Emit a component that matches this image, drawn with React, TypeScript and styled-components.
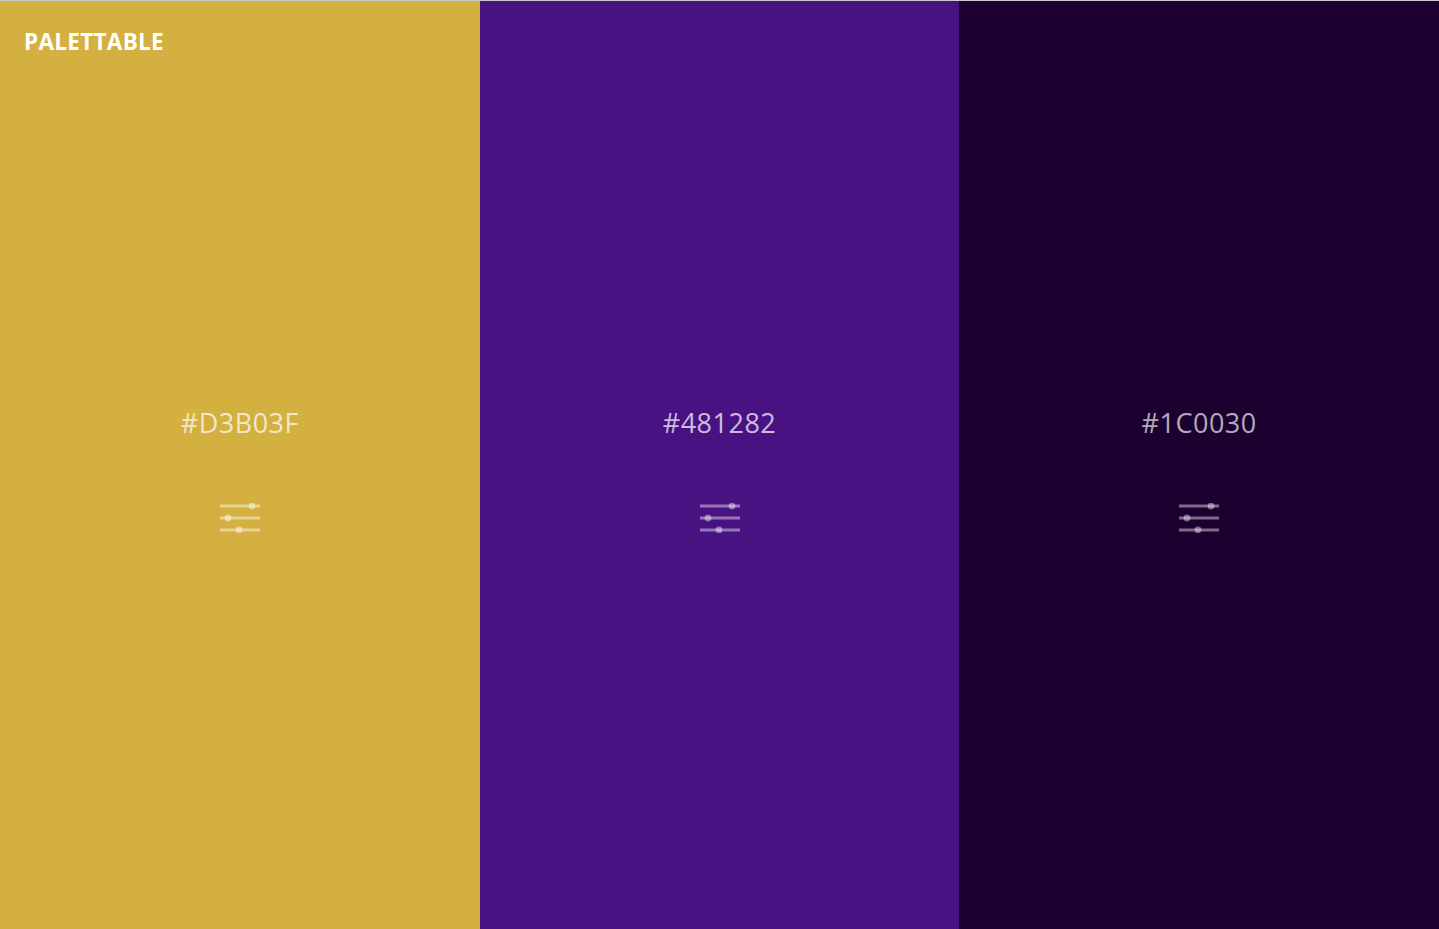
import React from 'react';
import styled, { createGlobalStyle } from 'styled-components';

const GlobalStyle = createGlobalStyle`
    html, body {
        margin: 0;
        padding: 0;
        height: 100%;
        overflow: hidden;
    }
    #root {
        height: 100%;
    }
`;

const COLORS = [
    { hex: '#D3B03F', text: 'rgba(255,255,255,0.72)', icon: 'rgba(255,255,255,0.45)' },
    { hex: '#481282', text: 'rgba(255,255,255,0.72)', icon: 'rgba(255,255,255,0.42)' },
    { hex: '#1C0030', text: 'rgba(255,255,255,0.68)', icon: 'rgba(255,255,255,0.42)' },
];

const Page = styled.div`
    position: relative;
    height: 100vh;
    box-sizing: border-box;
    border-top: 1px solid #c9c9c9;
    display: flex;
    font-family: "Open Sans", "Noto Sans", sans-serif;
`;

const Logo = styled.div`
    position: absolute;
    top: 25px;
    left: 24px;
    font-size: 22.5px;
    font-weight: 700;
    letter-spacing: 0.3px;
    color: #fff;
`;

const Swatch = styled.div<{ $bg: string; $fg: string }>`
    flex: 1;
    background-color: ${p => p.$bg};
    color: ${p => p.$fg};
    display: flex;
    flex-direction: column;
    align-items: center;
    justify-content: center;
    padding-top: 8px;
`;

const HexLabel = styled.div`
    font-size: 27px;
    line-height: 36px;
    letter-spacing: 0.5px;
    font-weight: 400;
`;

const AdjustButton = styled.button<{ $fg: string }>`
    margin-top: 62px;
    border: 0;
    background: none;
    padding: 0;
    width: 42px;
    height: 30px;
    color: ${p => p.$fg};
    display: flex;
    align-items: center;
    justify-content: center;
    cursor: pointer;
`;

const SlidersIcon = () => (
    <svg width="42" height="30" viewBox="0 0 42 30" fill="currentColor" stroke="currentColor">
        <line x1="1" y1="3" x2="41" y2="3" strokeWidth="2.8" />
        <line x1="1" y1="15" x2="41" y2="15" strokeWidth="2.8" />
        <line x1="1" y1="27" x2="41" y2="27" strokeWidth="2.8" />
        <circle cx="33" cy="3" r="3.4" stroke="none" />
        <circle cx="9" cy="15" r="3.4" stroke="none" />
        <circle cx="20" cy="27" r="3.4" stroke="none" />
    </svg>
);

const App = () => {
    return (
        <>
            <GlobalStyle />
            <Page>
                <Logo>PALETTABLE</Logo>
                {COLORS.map(c => (
                    <Swatch key={c.hex} $bg={c.hex} $fg={c.text}>
                        <HexLabel>{c.hex}</HexLabel>
                        <AdjustButton $fg={c.icon} aria-label="adjust">
                            <SlidersIcon />
                        </AdjustButton>
                    </Swatch>
                ))}
            </Page>
        </>
    );
};

export default App;
